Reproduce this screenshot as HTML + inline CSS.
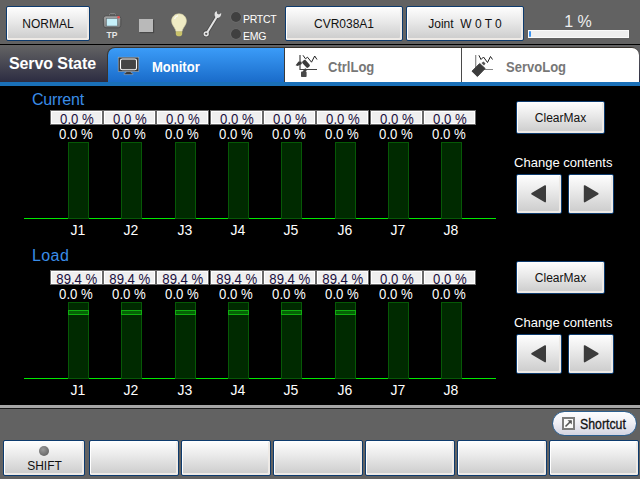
<!DOCTYPE html>
<html><head><meta charset="utf-8">
<style>
*{margin:0;padding:0;box-sizing:border-box}
html,body{width:640px;height:479px;overflow:hidden;background:#000;font-family:"Liberation Sans",sans-serif}
.a{position:absolute}
.btn{position:absolute;border:1px solid #0d3b6e;border-radius:2px;background:linear-gradient(#fefefe,#ebebeb 40%,#cbcbcb);box-shadow:inset 1px 1px 0 #fff,inset -2px -2px 0 #eeeae6;color:#111;text-align:center}
.top{left:0;top:0;width:640px;height:44px;background:#626262}
.hdr{left:0;top:44px;width:640px;height:42px;background:linear-gradient(#000 0,#000 1px,#646464 1px,#2c2c42 38px,#1a70b8 38px,#1a70b8 42px)}
.tab{position:absolute;top:48px;height:34px;background:#fff}
.lbl{position:absolute;color:#3a8de8;font-size:16px;letter-spacing:-0.2px}
.box{position:absolute;height:15px;background:#efefef;border:1px solid #6a6a6a;box-shadow:inset 1px 1px 0 #fff,inset -1px -1px 0 #fff;color:#1a1040;font-size:14px;line-height:15px;text-align:center;padding-top:1px}
.box span,.val span{display:inline-block;transform:scaleX(.94)}
.val{position:absolute;color:#fff;font-size:14px;line-height:13px;text-align:center;width:53px}
.bar{position:absolute;width:21px;background:#002a00;border:1px solid #065806}
.mk{position:absolute;left:-1px;width:21px;height:5px;border:1px solid #0fae0f;background:#056205}
.base{position:absolute;left:24px;width:472px;height:1px;background:#00e800}
.j{position:absolute;color:#fff;font-size:14px;width:40px;text-align:center}
.cc{position:absolute;color:#fff;font-size:13.5px;transform:scaleX(.965);transform-origin:0 0}
.bot{left:0;top:405px;width:640px;height:74px;background:#626262;border-top:3px solid #a6a6a6}
</style></head><body>
<div class="a top"></div>
<div class="btn" style="left:6px;top:6px;width:84px;height:35px;font-size:12px;line-height:35px">NORMAL</div>
<div class="btn" style="left:285px;top:6px;width:118px;height:35px;font-size:12px;line-height:35px">CVR038A1</div>
<div class="btn" style="left:406px;top:6px;width:118px;height:35px;font-size:12px;line-height:35px">Joint&nbsp; W 0 T 0</div>
<svg class="a" style="left:100px;top:10px" width="26" height="30" viewBox="0 0 26 30">
 <defs><linearGradient id="tpg" x1="0" y1="0" x2="0" y2="1"><stop offset="0" stop-color="#a4a4a4"/><stop offset="1" stop-color="#7e7e7e"/></linearGradient></defs>
 <rect x="9.5" y="3.6" width="6" height="2.8" rx="0.8" fill="none" stroke="#4c4c4c" stroke-width="1.4"/>
 <rect x="9.5" y="3.6" width="6" height="2.8" rx="0.8" fill="none" stroke="#b0b0b0" stroke-width="0.6"/>
 <rect x="3.4" y="5.8" width="17.4" height="12" rx="2.6" fill="url(#tpg)" stroke="#4a4a4a" stroke-width="0.9"/>
 <rect x="6.6" y="8.6" width="10.8" height="7.4" fill="#c6f0fa" stroke="#5a6a70" stroke-width="0.5"/>
 <circle cx="18.6" cy="7.2" r="1.3" fill="#e85050"/>
 <text x="12" y="28" font-family="Liberation Sans" font-weight="bold" font-size="8.5" fill="#e6e6e6" text-anchor="middle">TP</text>
</svg>
<div class="a" style="left:139px;top:19px;width:14px;height:13px;background:#b9b9b9;box-shadow:1px 1px 1px rgba(0,0,0,.25)"></div>
<svg class="a" style="left:168px;top:10px" width="22" height="30" viewBox="0 0 22 30">
 <path d="M11 3.8 C6.5 3.8 3.6 7.2 3.6 11 C3.6 14.5 6.2 16.8 7.4 19.6 L8 21.5 L14 21.5 L14.6 19.6 C15.8 16.8 18.4 14.5 18.4 11 C18.4 7.2 15.5 3.8 11 3.8 Z" fill="#efebc4" stroke="#d8d4a8" stroke-width="0.6"/>
 <path d="M7.8 21.5 L14.2 21.5 L14.2 24 C14.2 25.6 12.8 26.3 11 26.3 C9.2 26.3 7.8 25.6 7.8 24 Z" fill="#c9c26a"/>
 <path d="M6.5 9 C7 7 8.5 6 10 5.6" stroke="#fff" stroke-width="1.2" fill="none" opacity=".8"/>
</svg>
<svg class="a" style="left:200px;top:8px" width="26" height="32" viewBox="0 0 26 32">
 <g opacity=".35" stroke="#222" fill="none" stroke-linecap="round"><path d="M17 8.5 L7.5 24" stroke-width="3.6"/><circle cx="6.2" cy="25.8" r="2.2" stroke-width="2.6"/></g>
 <path d="M17 8.5 L7.5 24" stroke="#e4e4e4" stroke-width="2" stroke-linecap="round"/>
 <path d="M14.6 7.2 C14.4 5.2 15.2 3.6 16.6 3 L17.2 5.8 L19 6.6 L21.2 5 C21.4 7.4 20.2 9.4 18 10 L15.6 9.6 Z" fill="#e4e4e4"/>
 <circle cx="6.2" cy="25.8" r="1.9" fill="none" stroke="#e4e4e4" stroke-width="1.5"/>
</svg>
<div class="a" style="left:231px;top:12px;width:10px;height:10px;border-radius:50%;background:#404040;box-shadow:0 0 0 .6px #707070"></div>
<div class="a" style="left:231px;top:29px;width:10px;height:10px;border-radius:50%;background:#404040;box-shadow:0 0 0 .6px #707070"></div>
<div class="a" style="left:243px;top:13px;color:#fff;font-size:10.5px;line-height:12px;letter-spacing:-0.3px">PRTCT</div>
<div class="a" style="left:243px;top:30px;color:#fff;font-size:10.5px;line-height:12px;letter-spacing:-0.3px">EMG</div>
<div class="a" style="left:528px;top:14px;width:100px;text-align:center;color:#eee;font-size:16px;line-height:16px">1 %</div>
<div class="a" style="left:528px;top:30px;width:101px;height:8px;background:#efefef;border:1px solid #fbfbfb"></div><div class="a" style="left:529px;top:31px;width:2px;height:6px;background:#3a94f2;border-radius:1px"></div>
<div class="a hdr"></div>
<div class="a" style="left:9px;top:55px;color:#fff;font-size:16px;font-weight:bold;letter-spacing:-0.1px">Servo State</div>
<div class="a" style="left:107px;top:47px;width:532px;height:35px;background:#3a352e;border-radius:8px 8px 0 0"></div>
<div class="tab" style="left:108px;width:177px;border-top-left-radius:7px;border-right:1px solid #3a3a3a;background:linear-gradient(#3b9cf8,#1a6cca)"></div>
<div class="tab" style="left:285px;width:177px;border-right:1px solid #4a4a4a"></div>
<div class="tab" style="left:462px;width:177px;border-top-right-radius:7px"></div>
<svg class="a" style="left:117px;top:56px" width="23" height="20" viewBox="0 0 23 20">
 <rect x="1.2" y="1.2" width="20.6" height="14.4" fill="#3a3a3a" stroke="#e8e8e8" stroke-width="0.6" stroke-opacity=".6"/>
 <rect x="3.5" y="3" width="16" height="10.8" rx="1.8" fill="#444" stroke="#fafafa" stroke-width="1.1"/>
 <path d="M9 15.6 L14 15.6 L14 16.6 L15.8 17.2 L15.8 18.6 L7.2 18.6 L7.2 17.2 L9 16.6 Z" fill="#3a3a3a" stroke="#eee" stroke-width="0.5" stroke-opacity=".6"/>
</svg>
<svg class="a" style="left:292px;top:52px" width="30" height="28" viewBox="0 0 30 28">
 <path d="M8 3 L8 17.5 L25 17.5" stroke="#444" stroke-width="1.2" fill="none"/>
 <path d="M11 3.3 L13.5 6.8 L15.5 5.2 L19.5 10.2 L22.7 4 L25 7.5" stroke="#222" stroke-width="1" fill="none"/>
 <rect x="11.8" y="7.6" width="4.4" height="8.4" rx="1.4" transform="rotate(-42 14 11.8)" fill="#3c3c3c"/>
 <path d="M3.6 13.2 L6.6 9.6 L9.6 9.8 L9.8 12 L5.6 14 Z" fill="#3c3c3c"/>
 <path d="M10.5 19.5 L13.2 16.2 L15.2 17.6 L12.8 21 Z" fill="#444"/>
 <rect x="9" y="19.6" width="5.6" height="5.4" rx="0.8" fill="#484848"/>
</svg>
<svg class="a" style="left:468px;top:52px" width="30" height="28" viewBox="0 0 30 28">
 <path d="M7.7 3 L7.7 17.5 L25 17.5" stroke="#888" stroke-width="1.2" fill="none"/>
 <path d="M10.9 3.3 L13 7.5 L15.5 5 L19.5 10.5 L22.5 4.5 L24.5 7.5" stroke="#222" stroke-width="1" fill="none"/>
 <path d="M4 19.2 L11.7 11.5 L17.1 16.5 L9.4 24.5 Z" fill="#3c3c3c" stroke="#3c3c3c" stroke-width="1" stroke-linejoin="round"/>
 <path d="M13.5 11 L15.5 9.5 L17.5 11.5 L16 13.5 Z" fill="#555"/>
</svg>
<div class="a" style="left:152px;top:59px;color:#fff;font-size:14px;font-weight:bold;transform:scaleX(.93);transform-origin:0 0">Monitor</div>
<div class="a" style="left:328px;top:59px;color:#777;font-size:14px;font-weight:bold;transform:scaleX(.93);transform-origin:0 0">CtrlLog</div>
<div class="a" style="left:506px;top:59px;color:#777;font-size:14px;font-weight:bold;transform:scaleX(.93);transform-origin:0 0">ServoLog</div>
<div class="lbl" style="left:32px;top:91px;letter-spacing:-0.2px">Current</div>
<div class="base" style="top:218px"></div>
<div class="box" style="left:50px;top:110px;width:53px"><span>0.0 %</span></div>
<div class="val" style="left:49px;top:128px"><span>0.0 %</span></div>
<div class="bar" style="left:68px;top:142px;height:77px"></div>
<div class="j" style="left:58px;top:222px">J1</div>
<div class="box" style="left:103px;top:110px;width:53px"><span>0.0 %</span></div>
<div class="val" style="left:102px;top:128px"><span>0.0 %</span></div>
<div class="bar" style="left:121px;top:142px;height:77px"></div>
<div class="j" style="left:111px;top:222px">J2</div>
<div class="box" style="left:156px;top:110px;width:53px"><span>0.0 %</span></div>
<div class="val" style="left:155px;top:128px"><span>0.0 %</span></div>
<div class="bar" style="left:175px;top:142px;height:77px"></div>
<div class="j" style="left:165px;top:222px">J3</div>
<div class="box" style="left:210px;top:110px;width:53px"><span>0.0 %</span></div>
<div class="val" style="left:209px;top:128px"><span>0.0 %</span></div>
<div class="bar" style="left:228px;top:142px;height:77px"></div>
<div class="j" style="left:218px;top:222px">J4</div>
<div class="box" style="left:263px;top:110px;width:53px"><span>0.0 %</span></div>
<div class="val" style="left:262px;top:128px"><span>0.0 %</span></div>
<div class="bar" style="left:281px;top:142px;height:77px"></div>
<div class="j" style="left:271px;top:222px">J5</div>
<div class="box" style="left:316px;top:110px;width:53px"><span>0.0 %</span></div>
<div class="val" style="left:315px;top:128px"><span>0.0 %</span></div>
<div class="bar" style="left:335px;top:142px;height:77px"></div>
<div class="j" style="left:325px;top:222px">J6</div>
<div class="box" style="left:370px;top:110px;width:53px"><span>0.0 %</span></div>
<div class="val" style="left:369px;top:128px"><span>0.0 %</span></div>
<div class="bar" style="left:388px;top:142px;height:77px"></div>
<div class="j" style="left:378px;top:222px">J7</div>
<div class="box" style="left:423px;top:110px;width:53px"><span>0.0 %</span></div>
<div class="val" style="left:422px;top:128px"><span>0.0 %</span></div>
<div class="bar" style="left:441px;top:142px;height:77px"></div>
<div class="j" style="left:431px;top:222px">J8</div>
<div class="btn" style="left:516px;top:101px;width:89px;height:33px;font-size:12px;line-height:33px">ClearMax</div>
<div class="cc" style="left:514px;top:155px">Change contents</div>
<div class="btn" style="left:516px;top:174px;width:46px;height:40px"><svg width="43" height="37" style="position:absolute;left:0;top:0"><path d="M15 18.8 L28.2 11 L28.2 26.6 Z" fill="#3c3c3c" stroke="#3c3c3c" stroke-width="1.6" stroke-linejoin="round"/></svg></div>
<div class="btn" style="left:568px;top:174px;width:46px;height:40px"><svg width="43" height="37" style="position:absolute;left:0;top:0"><path d="M28.8 18.8 L15.6 11 L15.6 26.6 Z" fill="#3c3c3c" stroke="#3c3c3c" stroke-width="1.6" stroke-linejoin="round"/></svg></div>
<div class="lbl" style="left:32px;top:247px;letter-spacing:0.4px">Load</div>
<div class="base" style="top:378px"></div>
<div class="box" style="left:50px;top:270px;width:53px"><span>89.4 %</span></div>
<div class="val" style="left:49px;top:288px"><span>0.0 %</span></div>
<div class="bar" style="left:68px;top:302px;height:77px"><div class="mk" style="top:7px"></div></div>
<div class="j" style="left:58px;top:382px">J1</div>
<div class="box" style="left:103px;top:270px;width:53px"><span>89.4 %</span></div>
<div class="val" style="left:102px;top:288px"><span>0.0 %</span></div>
<div class="bar" style="left:121px;top:302px;height:77px"><div class="mk" style="top:7px"></div></div>
<div class="j" style="left:111px;top:382px">J2</div>
<div class="box" style="left:156px;top:270px;width:53px"><span>89.4 %</span></div>
<div class="val" style="left:155px;top:288px"><span>0.0 %</span></div>
<div class="bar" style="left:175px;top:302px;height:77px"><div class="mk" style="top:7px"></div></div>
<div class="j" style="left:165px;top:382px">J3</div>
<div class="box" style="left:210px;top:270px;width:53px"><span>89.4 %</span></div>
<div class="val" style="left:209px;top:288px"><span>0.0 %</span></div>
<div class="bar" style="left:228px;top:302px;height:77px"><div class="mk" style="top:7px"></div></div>
<div class="j" style="left:218px;top:382px">J4</div>
<div class="box" style="left:263px;top:270px;width:53px"><span>89.4 %</span></div>
<div class="val" style="left:262px;top:288px"><span>0.0 %</span></div>
<div class="bar" style="left:281px;top:302px;height:77px"><div class="mk" style="top:7px"></div></div>
<div class="j" style="left:271px;top:382px">J5</div>
<div class="box" style="left:316px;top:270px;width:53px"><span>89.4 %</span></div>
<div class="val" style="left:315px;top:288px"><span>0.0 %</span></div>
<div class="bar" style="left:335px;top:302px;height:77px"><div class="mk" style="top:7px"></div></div>
<div class="j" style="left:325px;top:382px">J6</div>
<div class="box" style="left:370px;top:270px;width:53px"><span>0.0 %</span></div>
<div class="val" style="left:369px;top:288px"><span>0.0 %</span></div>
<div class="bar" style="left:388px;top:302px;height:77px"></div>
<div class="j" style="left:378px;top:382px">J7</div>
<div class="box" style="left:423px;top:270px;width:53px"><span>0.0 %</span></div>
<div class="val" style="left:422px;top:288px"><span>0.0 %</span></div>
<div class="bar" style="left:441px;top:302px;height:77px"></div>
<div class="j" style="left:431px;top:382px">J8</div>
<div class="btn" style="left:516px;top:261px;width:89px;height:33px;font-size:12px;line-height:33px">ClearMax</div>
<div class="cc" style="left:514px;top:315px">Change contents</div>
<div class="btn" style="left:516px;top:334px;width:46px;height:40px"><svg width="43" height="37" style="position:absolute;left:0;top:0"><path d="M15 18.8 L28.2 11 L28.2 26.6 Z" fill="#3c3c3c" stroke="#3c3c3c" stroke-width="1.6" stroke-linejoin="round"/></svg></div>
<div class="btn" style="left:568px;top:334px;width:46px;height:40px"><svg width="43" height="37" style="position:absolute;left:0;top:0"><path d="M28.8 18.8 L15.6 11 L15.6 26.6 Z" fill="#3c3c3c" stroke="#3c3c3c" stroke-width="1.6" stroke-linejoin="round"/></svg></div>
<div class="a bot"></div>
<div class="a" style="left:0;top:408px;width:640px;height:1px;background:#1a1a1a"></div>
<div class="a" style="left:552px;top:411px;width:85px;height:25px;border:1px solid #2d5f8f;border-radius:13px;background:linear-gradient(#fdfdff,#f0f0f6 45%,#d4d4e2)"></div>
<div class="a" style="left:562px;top:417px;width:13px;height:13px;border:2px solid #7c7c7c;background:#fafafa"></div>
<svg class="a" style="left:562px;top:417px" width="13" height="13"><path d="M3.5 9.5 L9 4" stroke="#555" stroke-width="1.6"/><path d="M5.5 3.2 L9.8 3.2 L9.8 7.5 Z" fill="#555"/></svg>
<div class="a" style="left:580px;top:416px;font-size:14px;line-height:16px;color:#111;-webkit-text-stroke:0.3px #111;transform:scaleX(.88);transform-origin:0 0">Shortcut</div>
<div class="btn" style="left:3px;top:440px;height:36px;width:82px"></div>
<div class="btn" style="left:89px;top:440px;height:36px;width:90px"></div>
<div class="btn" style="left:181px;top:440px;height:36px;width:90px"></div>
<div class="btn" style="left:273px;top:440px;height:36px;width:90px"></div>
<div class="btn" style="left:365px;top:440px;height:36px;width:90px"></div>
<div class="btn" style="left:457px;top:440px;height:36px;width:90px"></div>
<div class="btn" style="left:549px;top:440px;height:36px;width:90px"></div>
<div class="a" style="left:39px;top:446px;width:10px;height:10px;border-radius:50%;background:radial-gradient(circle at 40% 35%,#9a9a9a,#6a6a6a 70%,#555)"></div>
<div class="a" style="left:3px;top:459px;width:83px;text-align:center;font-size:12px;line-height:14px;color:#111">SHIFT</div>
</body></html>
